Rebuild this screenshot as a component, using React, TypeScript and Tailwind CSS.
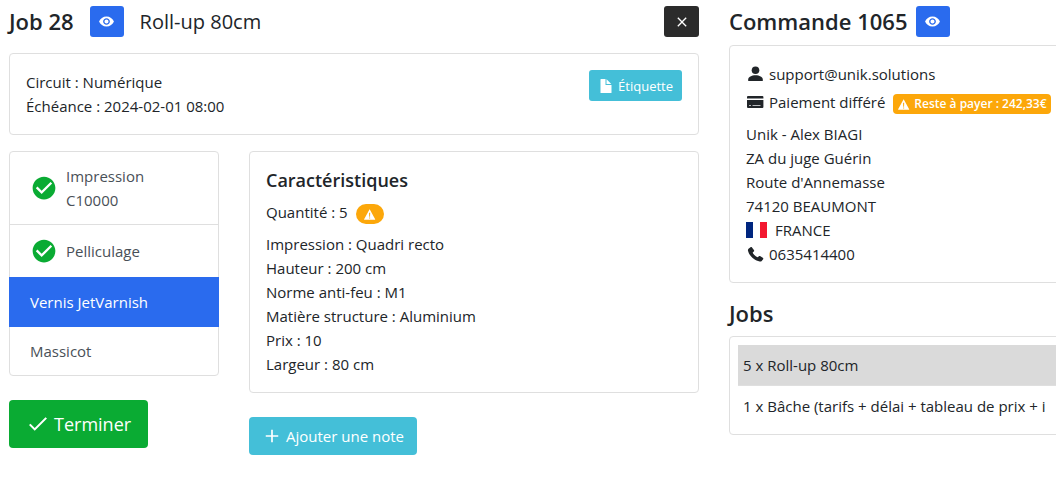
import type { ReactNode } from "react";
import {
  IoMdAdd,
  IoMdCheckmark,
  IoMdCheckmarkCircle,
  IoMdClose,
  IoMdEye,
} from "react-icons/io";
import { IoDocumentSharp, IoWarningSharp } from "react-icons/io5";

const steps = [
  { id: 1, title: "Impression C10000", done: true },
  { id: 2, title: "Pelliculage", done: true },
  { id: 3, title: "Vernis JetVarnish", active: true },
  { id: 4, title: "Massicot" },
];

const features = [
  "Impression : Quadri recto",
  "Hauteur : 200 cm",
  "Norme anti-feu : M1",
  "Matière structure : Aluminium",
  "Prix : 10",
  "Largeur : 80 cm",
];

const address = [
  "Unik - Alex BIAGI",
  "ZA du juge Guérin",
  "Route d'Annemasse",
  "74120 BEAUMONT",
];

const jobs = [
  { id: 28, title: "5 x Roll-up 80cm", current: true },
  { id: 29, title: "1 x Bâche (tarifs + délai + tableau de prix + i" },
];

const Card = ({
  className = "",
  children,
}: {
  className?: string;
  children: ReactNode;
}) => (
  <div className={`rounded border border-[#dfdfdf] bg-white ${className}`}>
    {children}
  </div>
);

const ViewButton = ({ label }: { label: string }) => (
  <button
    aria-label={label}
    className="flex h-[31px] w-[34px] items-center justify-center rounded-[3px] bg-[#2a6bee] text-white"
  >
    <IoMdEye size={17} />
  </button>
);

const FrenchFlag = () => (
  <svg width="21" height="16" viewBox="0 0 21 16" aria-hidden="true">
    <path fill="#00267f" d="M0 0h7v16H0z" />
    <path fill="#fff" d="M7 0h7v16H7z" />
    <path fill="#f31830" d="M14 0h7v16h-7z" />
  </svg>
);

const PersonIcon = () => (
  <svg width="19" height="20" viewBox="0 0 19 20" fill="currentColor">
    <circle cx="9.5" cy="6.2" r="3.8" />
    <path d="M2.2 17v-1.6c0-2.5 3.4-4.2 7.3-4.2s7.3 1.7 7.3 4.2V17z" />
  </svg>
);

const CreditCardIcon = () => (
  <svg width="19" height="20" viewBox="0 0 19 20" aria-hidden="true">
    <path
      fill="currentColor"
      d="M2 4h14.400q1 0 1 1v1.400H1V5q0-1 1-1zM1 8h16.400v7q0 1-1 1H2q-1 0-1-1z"
    />
    <path stroke="#b9bbbd" d="M3 13.500h2M6.500 13.500h8" />
  </svg>
);

const PhoneIcon = () => (
  <svg width="19" height="20" viewBox="0 0 19 20" fill="currentColor">
    <path d="M2.500 4.800 4.500 3.200c.5-.4 1.100-.3 1.500.2l1.900 2.600c.4.5.3 1-.1 1.400L6.700 8.400c.5 1.800 3 4.200 5 4.900l1.200-1c.4-.4 1-.4 1.500-.1l2.400 1.600c.6.4.7 1 .3 1.500l-1.400 1.600c-.5.5-1.200.7-2 .5C8.200 16.400 3 11.500 2 6.800c-.2-.8 0-1.500.5-2z" />
  </svg>
);

const StepList = () => (
  <Card>
    {steps.map((step, index) => (
      <a
        key={step.id}
        href="#"
        className={`flex items-center gap-2 py-3 ${
          step.active
            ? "-mx-px border border-[#2a6bee] bg-[#2a6bee] px-5 text-white"
            : "px-5 text-[#495057]"
        } ${index === 0 ? "border-b border-[#dfdfdf]" : ""}`}
      >
        {step.done && (
          <IoMdCheckmarkCircle size={28} className="shrink-0 text-[#0aab33]" />
        )}
        <span className={step.done ? "max-w-24" : ""}>{step.title}</span>
      </a>
    ))}
  </Card>
);

const JobPanel = () => (
  <main className="min-w-0">
    <header className="flex items-center gap-4">
      <h1 className="text-[22px] leading-[29px] font-semibold">Job 28</h1>
      <ViewButton label="Voir le job" />
      <span className="text-xl">Roll-up 80cm</span>
      <button
        aria-label="Fermer"
        className="ml-auto flex h-[31px] w-[35px] items-center justify-center rounded-[3px] bg-[#2b2b2b] text-white"
      >
        <IoMdClose size={16} />
      </button>
    </header>

    <Card className="mt-4 flex items-start justify-between p-4">
      <p>
        Circuit : Numérique
        <br />
        Échéance : 2024-02-01 08:00
      </p>
      <button className="flex h-[31px] items-center gap-1 rounded-[3px] border border-transparent bg-[#44bfd8] px-2 text-[13px] text-white">
        <IoDocumentSharp size={16} />
        Étiquette
      </button>
    </Card>

    <div className="mt-4 grid grid-cols-[7fr_15fr] items-start gap-[30px]">
      <div>
        <StepList />
        <button className="mt-6 flex h-12 items-center gap-1 rounded border border-transparent bg-[#0aab33] px-4 text-lg text-white">
          <IoMdCheckmark size={24} />
          Terminer
        </button>
      </div>
      <div>
        <Card className="p-4">
          <h2 className="mb-2 text-lg leading-6 font-semibold">
            Caractéristiques
          </h2>
          <p className="mb-2 flex items-center gap-2">
            Quantité : 5
            <span className="flex h-5 w-7 items-center justify-center self-end rounded-full bg-[#fca70a] text-white">
              <IoWarningSharp size={13} />
            </span>
          </p>
          <ul>
            {features.map((feature) => (
              <li key={feature}>{feature}</li>
            ))}
          </ul>
        </Card>
        <button className="mt-6 flex h-[38px] items-center gap-1 rounded border border-transparent bg-[#44bfd8] px-3 text-white">
          <IoMdAdd size={20} />
          Ajouter une note
        </button>
      </div>
    </div>
  </main>
);

const OrderPanel = () => (
  <aside className="min-w-0 whitespace-nowrap">
    <header className="flex items-center gap-2">
      <h1 className="text-[22px] leading-[29px] font-semibold">
        Commande 1065
      </h1>
      <ViewButton label="Voir la commande" />
    </header>

    <Card className="mt-2 p-4">
      <p className="mb-1 flex items-center gap-1">
        <PersonIcon />
        support@unik.solutions
      </p>
      <p className="mb-2 flex items-center gap-1">
        <CreditCardIcon />
        Paiement différé
        <span className="ml-1 flex h-5 items-center gap-1 self-end rounded bg-[#fca70a] px-1 text-xs font-semibold text-white">
          <IoWarningSharp size={13} />
          Reste à payer : 242,33€
        </span>
      </p>
      <address className="not-italic">
        {address.map((line) => (
          <div key={line}>{line}</div>
        ))}
        <div className="flex items-center gap-2">
          <FrenchFlag />
          FRANCE
        </div>
      </address>
      <p className="flex items-center gap-1">
        <PhoneIcon />
        0635414400
      </p>
    </Card>

    <h2 className="mt-4 text-[22px] leading-[29px] font-semibold">Jobs</h2>
    <Card className="mt-2 p-2">
      {jobs.map((job) => (
        <a
          key={job.id}
          href="#"
          className={`block px-[5px] py-2 ${
            job.current ? "border-b border-[#dfdfdf] bg-[#dadada]" : ""
          }`}
        >
          {job.title}
        </a>
      ))}
    </Card>
  </aside>
);

export default function App() {
  return (
    <div className="overflow-hidden bg-white pt-1.5 pl-[9px] font-['Open_Sans','Noto_Sans',sans-serif] text-[15px] leading-6 text-[#212529]">
      <div className="-mr-[18px] grid grid-cols-[2fr_1fr] items-start gap-[30px]">
        <JobPanel />
        <OrderPanel />
      </div>
    </div>
  );
}
